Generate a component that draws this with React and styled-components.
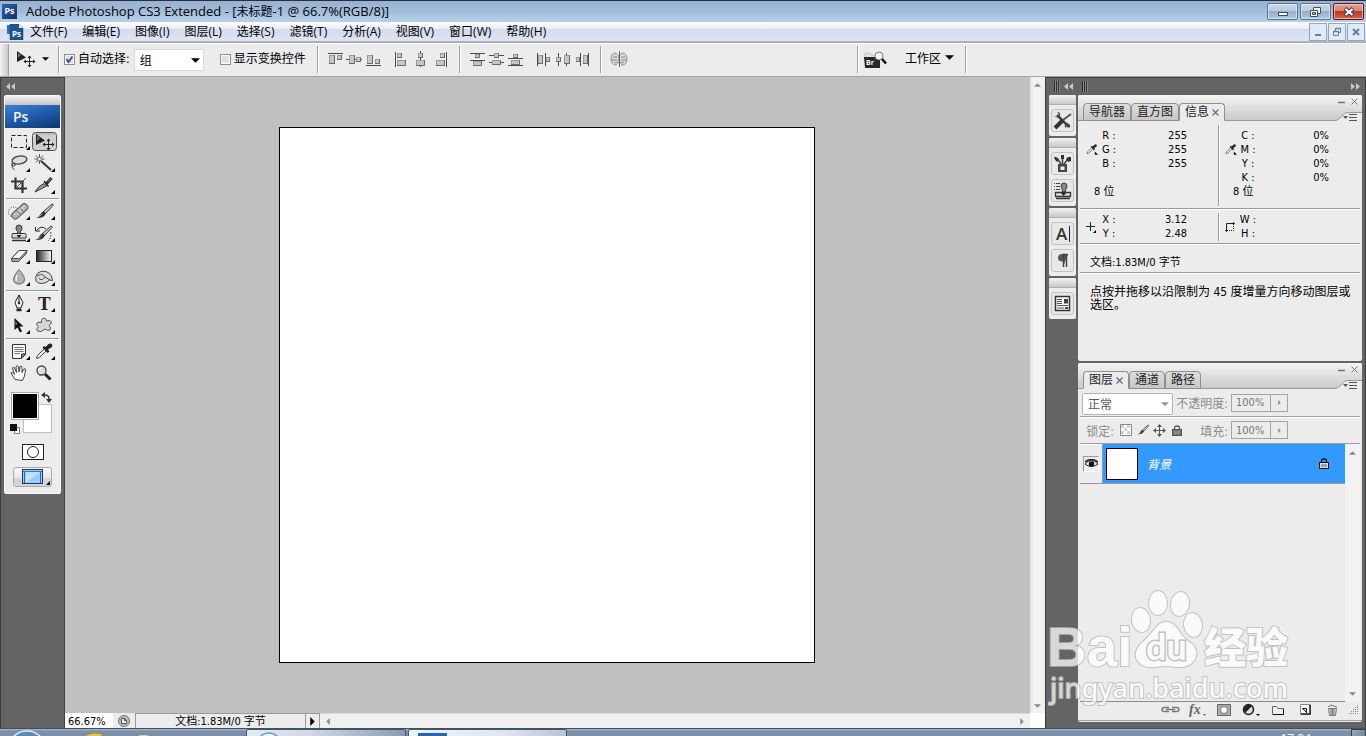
import React from "react";
import styled, { createGlobalStyle, css } from "styled-components";

const ui = `"DejaVu Sans Condensed", "Noto Sans", "Noto Sans CJK SC", sans-serif`;
const shell = `"Open Sans", "Noto Sans CJK SC", sans-serif`;

const GlobalStyle = createGlobalStyle`
  *, *::before, *::after { box-sizing: border-box; }
  body { margin: 0; background: #c0c0c0; font: 12px ${ui}; color: #000; }
  button, input, select { font: inherit; color: inherit; margin: 0; padding: 0; border: 0; background: none; border-radius: 0; }
  svg { display: block; flex: none; }
  h1, p { margin: 0; font: inherit; }
`;

const Window = styled.div`
  display: flex;
  flex-direction: column;
  min-height: 100vh;
  min-width: 1100px;
  overflow: hidden;
`;

/* ---------- title bar ---------- */
const TitleBar = styled.header`
  display: flex;
  align-items: center;
  height: 22px;
  padding: 0 2px;
  border-top: 1px solid #2b3036;
  background: linear-gradient(#97b2d1, #a2bddb 50%, #b8d0ea);
  font: 13px/20px ${shell};
`;
const AppBadge = styled.span`
  width: 15px;
  height: 15px;
  margin-right: 9px;
  background: linear-gradient(135deg, #2f62b0, #0e2f6c);
  color: #fff;
  font: bold 9px/14px ${shell};
  text-align: center;
`;
const Title = styled.h1`
  flex: 1;
  white-space: nowrap;
`;
const FileName = styled.span`
  font-size: 12px;
`;
const CaptionButtons = styled.div`
  display: flex;
  gap: 2px;
`;
const CaptionButton = styled.button`
  display: grid;
  place-items: center;
  width: 31px;
  height: 17px;
  border: 1px solid ${(p) => (p.$close ? "#5a1420" : "#5d7187")};
  border-radius: 2px;
  box-shadow: inset 0 0 0 1px rgba(255, 255, 255, 0.5);
  background: ${(p) =>
    p.$close
      ? "linear-gradient(#e3a094, #d98172 48%, #bd3a22 50%, #d0664e)"
      : "linear-gradient(#c5d8ec, #b6cbe2 48%, #94aecb 50%, #b0c9e4)"};
`;

/* ---------- menu bar ---------- */
const MenuBar = styled.nav`
  display: flex;
  align-items: center;
  gap: 1px;
  height: 20px;
  padding: 0 1px 0 7px;
  background: linear-gradient(#ffffff, #e9edf7 35%, #d5dbee 38%, #dfe4f5);
  border-bottom: 1px solid #b2b7ca;
  font: 12px/18px ${shell};
`;
const DocIcon = styled.svg`
  margin-right: -2px;
`;
const MenuItem = styled.button`
  height: 19px;
  padding: 0 7px;
  white-space: nowrap;
`;
const MdiButtons = styled.div`
  display: flex;
  gap: 1px;
  margin-left: auto;
`;
const MdiButton = styled.button`
  display: grid;
  place-items: center;
  width: 18px;
  height: 18px;
  border: 1px solid #93a6ba;
  background: #dfebf8;
`;

/* ---------- options bar ---------- */
const OptionsBar = styled.div`
  display: flex;
  align-items: center;
  height: 35px;
  background: #ececec;
  border-top: 1px solid #a9a9a9;
  border-bottom: 1px solid #a6a6a6;
  box-shadow: inset 0 1px #fff;
`;
const Grip = styled.span`
  align-self: stretch;
  width: 9px;
  margin-top: 1px;
  border-right: 1px solid #a0a0a0;
  background: linear-gradient(90deg, #f4f4f4, #c9c9c9);
`;
const ToolPreset = styled.button`
  display: flex;
  align-items: center;
  gap: 6px;
  width: 49px;
  height: 30px;
  padding: 0 0 2px 7px;
`;
const Rule = styled.span`
  width: 2px;
  height: 27px;
  border-left: 1px solid #a0a0a0;
  background: #fff;
`;
const Check = styled.label`
  display: flex;
  align-items: center;
  gap: 3px;
  height: 26px;
  margin-left: ${(p) => p.$gap}px;
  padding-bottom: 4px;
  white-space: nowrap;
`;
const CheckBox = styled.input`
  appearance: none;
  width: 11px;
  height: 11px;
  margin-top: 4px;
  border: 1px solid #8b8f94;
  box-shadow: inset 0 0 0 1px #fff;
  background: #dfe1e4;
`;
const TickHolder = styled.span`
  display: grid;
  & > * { grid-area: 1 / 1; }
  & > svg { margin-top: 4px; pointer-events: none; }
`;
const SelectFrame = styled.span`
  display: grid;
  width: ${(p) => p.$w}px;
  height: 22px;
  margin: ${(p) => p.$top || 0}px 0 0 ${(p) => p.$gap || 0}px;
  border: 1px solid ${(p) => (p.$dim ? "#b4b4b4" : "#d5dae2")};
  border-radius: ${(p) => (p.$dim ? 2 : 0)}px;
  background: #fff;
  color: ${(p) => (p.$dim ? "#5a5a5a" : "#000")};
  & > * { grid-area: 1 / 1; }
  & > svg { justify-self: end; align-self: center; margin: 2px 3px 0 0; pointer-events: none; }
`;
const Select = styled.select`
  appearance: none;
  width: 100%;
  padding: 2px 16px 0 5px;
  font-size: 12px;
  outline: 0;
`;
const IconRow = styled.div`
  display: flex;
  gap: 1px;
  margin: 0 ${(p) => p.$mr}px 0 ${(p) => p.$ml}px;
`;
const IconButton = styled.button`
  display: grid;
  place-items: center;
  width: 18px;
  height: 20px;
  margin-bottom: 2px;
`;
const WorkspaceTools = styled.div`
  display: flex;
  align-items: center;
  min-width: 509px;
  margin-left: auto;
`;
const BridgeButton = styled.button`
  margin-left: 5px;
`;
const WorkspaceButton = styled.button`
  display: flex;
  align-items: center;
  gap: 4px;
  margin: 0 11px 0 18px;
  padding-bottom: 4px;
`;

/* ---------- main area ---------- */
const Workspace = styled.div`
  display: flex;
  flex: 1;
  min-height: 0;
`;
const LeftDock = styled.aside`
  flex: none;
  width: 65px;
  padding: 0 3px;
  border: 1px solid #3f3f3f;
  border-bottom: 0;
  background: #646464;
`;
const DockHeader = styled.div`
  display: flex;
  align-items: center;
  height: 17px;
  padding: 0 2px;
`;
const Palette = styled.div`
  width: 57px;
  border: 1px solid #f8f8f8;
  border-radius: 2px;
  background: #ececec;
  padding-bottom: 6px;
`;
const PaletteCap = styled.div`
  height: 9px;
  background: linear-gradient(#f2f2f2, #c4c4c4);
`;
const PsBanner = styled.div`
  height: 23px;
  padding-left: 8px;
  background: linear-gradient(165deg, #3a80d8, #2059ab 50%, #0c3572);
  color: #f2f8ff;
  font: 600 14px/23px ${shell};
`;
const ToolGrid = styled.div`
  display: grid;
  grid-template-columns: 25px 25px;
  margin: ${(p) => (p.$first ? 3 : 1)}px 0 1px 2px;
`;
const ToolButton = styled.button`
  width: 25px;
  height: 22px;
`;
const ToolRule = styled.hr`
  height: 2px;
  margin: 0 1px;
  border: 0;
  border-top: 1px solid #9a9a9a;
  background: #fff;
`;
const Swatches = styled.div`
  display: grid;
  grid-template: 2px 12px 16px 14px / 12px 17px 13px;
  margin: 5px 0 0 6px;
`;
const Foreground = styled.button`
  z-index: 1;
  grid-area: 2 / 1 / span 2 / span 2;
  width: 28px;
  border: 1px solid #a8a8a8;
  box-shadow: inset 0 0 0 1px #fff;
  background: #000;
`;
const Background = styled.button`
  grid-area: 3 / 2 / span 2 / span 2;
  width: 29px;
  height: 29px;
  border: 1px solid #c0c0c0;
  background: #fff;
`;
const SwapButton = styled.button`
  grid-area: 1 / 3 / span 2;
`;
const ResetButton = styled.button`
  grid-area: 4 / 1;
  align-self: end;
  margin-left: -1px;
`;
const MaskButton = styled.button`
  display: grid;
  place-items: center;
  width: 22px;
  height: 16px;
  margin: 10px auto 0;
  border: 1px solid #222;
  background: #fff;
`;
const ScreenButton = styled.button`
  display: grid;
  place-items: center;
  width: 39px;
  height: 20px;
  margin: 7px auto 0;
  border: 1px solid #aaa;
  border-radius: 3px;
  background: linear-gradient(#f8f8f8, #e6e6e6 55%, #d4d4d4 60%);
`;

const DocumentArea = styled.main`
  display: grid;
  flex: 1;
  min-width: 0;
  grid-template: 1fr 15px / 1fr 15px;
`;
const Pasteboard = styled.div`
  display: grid;
  place-items: center;
  padding-right: 1px;
  background: #c0c0c0;
`;
const Page = styled.div`
  width: 536px;
  aspect-ratio: 1;
  border: 1px solid #000;
  background: #fff;
`;
const VerticalBar = styled.div`
  display: flex;
  flex-direction: column;
  justify-content: space-between;
  align-items: center;
  padding: 6px 0 5px;
  background: linear-gradient(90deg, #e4e4e4, #f4f4f4 30%, #f0f0f0);
`;
const StatusBar = styled.footer`
  display: flex;
  align-items: stretch;
  height: 15px;
  background: #ececec;
  font-size: 11px;
  line-height: 15px;
`;
const ZoomInput = styled.input`
  width: 48px;
  padding: 1px 0 0 3px;
  background: #fff;
`;
const StatusIcon = styled.button`
  display: grid;
  place-items: center;
  width: 22px;
`;
const DocSize = styled.span`
  width: 171px;
  border: 1px solid #9a9a9a;
  border-width: 1px 1px 0;
  text-align: center;
`;
const StatusArrow = styled.button`
  display: grid;
  place-items: center;
  width: 14px;
  border: 1px solid #9a9a9a;
  border-width: 1px 1px 0 0;
`;
const HorizontalBar = styled.div`
  display: flex;
  flex: 1;
  align-items: center;
  justify-content: space-between;
  padding: 0 6px;
  border-top: 1px solid #ddd;
  background: #f0f0f0;
`;
const Corner = styled.div`
  background: #fff;
`;

/* ---------- right dock ---------- */
const RightDock = styled.aside`
  flex: none;
  width: 321px;
  padding: 0 3px 6px;
  border: 1px solid #3a3a3a;
  border-bottom: 0;
  background: #646464;
  display: flex;
  flex-direction: column;
`;
const DockTitle = styled.div`
  display: flex;
  align-items: center;
  gap: 4px;
  height: 17px;
  padding: 0 1px 0 5px;
  & > :last-child { margin-left: auto; }
`;
const DockBody = styled.div`
  display: flex;
  flex: 1;
  gap: 2px;
`;
const IconDock = styled.div`
  display: flex;
  flex-direction: column;
  gap: 2px;
  width: 27px;
`;
const IconGroup = styled.div`
  display: flex;
  flex-direction: column;
  align-items: center;
  gap: 4px;
  padding-bottom: 4px;
  border-radius: 2px;
  background: #ececec;
`;
const IconCap = styled.div`
  align-self: stretch;
  height: 10px;
  border-radius: 2px 2px 0 0;
  border-bottom: 1px solid #b0b0b0;
  background: linear-gradient(#f2f2f2, #c8c8c8);
`;
const DockButton = styled.button`
  display: grid;
  place-items: center;
  width: 23px;
  height: 23px;
  border: 1px solid #c2c2c2;
  border-radius: 3px;
  background: #e8e8e8;
  & > svg { overflow: visible; }
`;
const Panels = styled.div`
  display: flex;
  flex: 1;
  flex-direction: column;
  gap: 2px;
  min-width: 0;
`;
const Panel = styled.section`
  display: flex;
  flex-direction: column;
  flex: ${(p) => (p.$grow ? 1 : "none")};
  min-height: 266px;
  border-radius: 2px;
  background: #ececec;
`;
const TabStrip = styled.div`
  display: flex;
  align-items: flex-end;
  height: 26px;
  padding-left: 5px;
  border-radius: 2px 2px 0 0;
  background: linear-gradient(#f4f4f4, #c9c9c9);
  box-shadow: inset 0 -1px #9a9a9a;
`;
const Tab = styled.button`
  display: flex;
  align-items: center;
  gap: 3px;
  height: 18px;
  padding: 0 5px;
  border: 1px solid #8f8f8f;
  border-radius: 4px 4px 0 0;
  background: linear-gradient(#dedede, #c6c6c6);
  color: #222;
  font-size: 12px;
  line-height: 16px;
  white-space: nowrap;
  ${(p) =>
    p.$active &&
    css`
      background: #ececec;
      border-bottom-color: #ececec;
    `}
`;
const PanelControls = styled.div`
  display: flex;
  flex-direction: column;
  align-items: flex-end;
  margin-left: auto;
`;
const InfoTable = styled.table`
  border-collapse: collapse;
  flex: 1;
  font-size: 11px;
  line-height: 14px;
  & th { width: 22px; padding: 0; font-weight: normal; text-align: center; }
  & td { padding: 0; text-align: right; }
`;
const InfoRow = styled.div`
  display: grid;
  grid-template-columns: 138px 1fr;
  margin: 0 2px;
  padding: 4px 0 2px;
  border-bottom: 1px solid #9a9a9a;
  box-shadow: 0 1px #fff;
  font-size: 11px;
  line-height: 14px;
`;
const InfoCell = styled.div`
  display: flex;
  flex-direction: column;
  padding: ${(p) => p.$top}px 31px 0 6px;
  & + & { border-left: 1px solid #9a9a9a; box-shadow: inset 1px 0 #fff; }
`;
const Reading = styled.div`
  display: flex;
  align-items: ${(p) => (p.$top ? "flex-start" : "center")};
  & > svg { margin-top: ${(p) => p.$top || 0}px; }
`;
const BitDepth = styled.p`
  margin: auto 0 7px 8px;
`;
const DocLine = styled.p`
  margin: 0 2px;
  padding: 11px 10px 1px;
  border-bottom: 1px solid #9a9a9a;
  box-shadow: 0 1px #fff;
  font-size: 11px;
  line-height: 16px;
`;
const Hint = styled.p`
  padding: 13px 8px 0 12px;
  font-size: 12px;
  line-height: 13px;
`;
const LayerRow = styled.div`
  display: flex;
  align-items: center;
  height: 27px;
  margin: 0 2px;
  padding: 0 2px;
  border-bottom: 1px solid #a0a0a0;
  box-shadow: 0 1px #fff;
  color: #8c8c8c;
  white-space: nowrap;
  ${TabStrip} + & { height: 28px; }
`;
const FieldLabel = styled.label`
  width: ${(p) => p.$w}px;
  padding-right: 3px;
  text-align: right;
`;
const Stepper = styled.span`
  display: flex;
  width: 57px;
  height: 18px;
  border: 1px solid #a4a4a4;
`;
const StepInput = styled.input`
  width: 39px;
  padding-left: 4px;
  color: #777;
  font-size: 11px;
  border-right: 1px solid #a4a4a4;
`;
const StepButton = styled.button`
  display: grid;
  place-items: center;
  flex: 1;
`;
const LockButton = styled.button`
  display: grid;
  place-items: center;
  width: 17px;
  height: 18px;
`;
const LayerBody = styled.div`
  display: flex;
  flex: 1;
  margin: 0 2px;
`;
const LayerList = styled.ul`
  flex: 1;
  margin: 0;
  padding: 0;
  list-style: none;
  border-bottom: 1px solid #8a8a8a;
`;
const Layer = styled.li`
  display: flex;
  height: 40px;
  border-bottom: 1px solid #9a9a9a;
`;
const EyeCell = styled.button`
  display: grid;
  place-items: center;
  width: 23px;
  border-right: 1px solid #9a9a9a;
`;
const EyeBox = styled.span`
  display: grid;
  place-items: center;
  width: 16px;
  height: 16px;
  border: 1px solid #999;
  border-right-color: #fff;
  border-bottom-color: #fff;
`;
const LayerName = styled.div`
  display: flex;
  flex: 1;
  align-items: center;
  gap: 9px;
  padding: 0 16px 0 3px;
  background: #3399ff;
  color: #fff;
  font-style: italic;
  & > :last-child { margin-left: auto; }
`;
const Thumb = styled.span`
  width: 32px;
  height: 32px;
  border: 1px solid #000;
  background: #fff;
`;
const LayerScroll = styled.div`
  display: flex;
  flex-direction: column;
  justify-content: space-between;
  align-items: center;
  width: 15px;
  padding: 7px 0 6px;
  background: #f2f2f2;
`;
const LayerFooter = styled.footer`
  display: flex;
  align-items: center;
  justify-content: flex-end;
  gap: 7px;
  height: 19px;
  margin-bottom: 1px;
  padding: 0 3px 3px 0;
  border-bottom: 1px solid #a0a0a0;
`;
const FootButton = styled.button`
  display: grid;
  place-items: center;
  width: 20px;
  height: 16px;
`;

/* ---------- taskbar ---------- */
const Taskbar = styled.footer`
  display: flex;
  height: 8px;
  overflow: hidden;
  border-top: 1px solid #3d5064;
  background: linear-gradient(#a8bdd2, #7e91aa 2px, #7b8ea8);
`;
const TaskButton = styled.button`
  display: flex;
  height: 30px;
  width: ${(p) => p.$w}px;
  margin-right: 2px;
  padding-left: 8px;
  border: 1px solid #46566a;
  border-radius: 2px;
  background: linear-gradient(90deg, #e6ebf2, #d0d8e3 40%, #8c9bb0);
  ${(p) => p.$active && css`background: linear-gradient(90deg, #f0f3f8, #dfe6ef 60%, #b8c4d4);`}
`;
const Clock = styled.time`
  margin: 2px 40px 0 auto;
  color: #fff;
  font: 12px/16px ${shell};
`;
const ShowDesktop = styled.button`
  width: 15px;
  height: 30px;
  border: 1px solid #35414e;
  background: linear-gradient(135deg, #9aaabb, #4b5a6b);
`;

const Watermark = styled.div`
  position: absolute;
  right: 68px;
  bottom: 28px;
  pointer-events: none;
`;
const Mark = styled.g`
  fill: #fff;
  stroke: #b4b4b4;
  stroke-width: 2px;
  paint-order: stroke;
  opacity: 0.75;
`;

/* ---------- drawings ---------- */
const Down = ({ w = 9, c = "#000" }) => (
  <svg width={w} height={(w + 1) / 2} viewBox="0 0 10 5"><path d="M0 0H10L5 5Z" fill={c} /></svg>
);
const Up = () => <svg width="7" height="4" viewBox="0 0 8 4"><path d="M0 4H8L4 0Z" fill="#8a8a8a" /></svg>;
const Side = ({ flip, c = "#8a8a8a", w = 4, h = 7 }) => (
  <svg width={w} height={h} viewBox="0 0 4 8"><path d={flip ? "M4 0V8L0 4Z" : "M0 0V8L4 4Z"} fill={c} /></svg>
);
const Chevrons = ({ right }) => (
  <svg width="10" height="7" viewBox="0 0 10 7" fill="#c8c8c8">
    <path d={right ? "M0 0L4 3.500L0 7ZM5 0L9 3.500L5 7Z" : "M4 0V7L0 3.500ZM9 0V7L5 3.500Z"} />
  </svg>
);
const Ridges = () => (
  <svg width="6" height="11" viewBox="0 0 6 11"><path d="M.5 0V11M2.500 0V11M4.500 0V11" stroke="#2e2e2e" /><path d="M1.500 0V11M3.500 0V11M5.500 0V11" stroke="#8a8a8a" /></svg>
);
const Cross = ({ s = 7 }) => (
  <svg width={s} height={s} viewBox="0 0 7 7"><path d="M.5.5L6.500 6.500M6.500.5L.5 6.500" stroke="#666" strokeWidth="1.100" /></svg>
);
const Move = () => (
  <>
    <path d="M4 3V14L13 9.500Z" fill="#222" /><path d="M5 5V10L8 7Z" fill="#777" />
    <path d="M16.500 8.500V18.500M11.500 13.500H21.500" stroke="#222" />
    <path d="M16.500 7.500l2 2.500h-4zM16.500 19.500l2-2.500h-4zM10.500 13.500l2.500-2v4zM22.500 13.500l-2.500-2v4z" fill="#222" />
  </>
);
const Pipette = () => (
  <>
    <path d="M4.500 17.500L5.500 14.500L13 7L15 9L7.500 16.500Z" fill="#eee" stroke="#444" />
    <path d="M10.500 6.500L12 5L13.500 6L16 3.500Q18.500 1.500 20 3.500Q21 5.500 18.500 7L16 8.500L17.500 10.500L15.500 12Z" fill="#222" />
  </>
);
const BrushArt = () => (
  <>
    <path d="M11 11L20 3Q21.500 3 21 4.500L13.500 12.500Z" fill="#ccc" stroke="#333" />
    <path d="M11.500 10.500Q14.500 11.500 13.500 13.500Q11 17.500 4 17Q7.500 16 8.500 13Q9.500 10.500 11.500 10.500Z" fill="#333" />
    <path d="M10 12.500L7.500 15.500" stroke="#aaa" />
  </>
);

const tools = {
  marquee: <path d="M4.500 4.500H19.500V16.500H4.500Z" fill="none" stroke="#222" strokeDasharray="4 2" />,
  move: (
    <><rect x=".5" y="1.500" width="24" height="18" rx="3" fill="#cfcfcf" stroke="#555" /><path d="M2 3.500Q2 3 3 3H22" fill="none" stroke="#aaa" /><Move /></>
  ),
  lasso: (
    <><ellipse cx="12.500" cy="7" rx="7.500" ry="4" fill="#ddd" stroke="#444" strokeWidth="1.300" transform="rotate(-10 12.500 7)" />
      <path d="M5.500 9.500Q3.500 12 6 13Q9 13.500 8 11Q6 9.500 5 12Q4.500 15 7.500 17" fill="none" stroke="#444" /></>
  ),
  wand: (
    <><path d="M9 8L19 17" stroke="#333" strokeWidth="2" /><path d="M7.500 1V11M2.500 6H12.500M4 2.500L11 9.500M11 2.500L4 9.500" stroke="#555" /><circle cx="7.500" cy="6" r="1.800" fill="#fff" stroke="#444" strokeWidth=".6" /></>
  ),
  crop: (
    <><path d="M8.500 2.500V13.500H20M4 6.500H15.500V18" fill="none" stroke="#333" strokeWidth="2.200" /><path d="M9.500 12.500L19 3" stroke="#444" /></>
  ),
  slice: (
    <><path d="M3 17Q6 11 12 8.500L14.500 11Q9 14 3 17Z" fill="#999" stroke="#333" /><path d="M12 6L16.500 11.500" stroke="#222" strokeWidth="1.500" /><path d="M14.500 8.500L19.500 3" stroke="#222" strokeWidth="3" /><path d="M15.500 7L19 3.500" stroke="#aaa" /></>
  ),
  heal: (
    <><circle cx="6.500" cy="11" r="5" fill="none" stroke="#333" strokeDasharray="1 1.500" />
      <rect x="3" y="7" width="19" height="7" rx="3.500" fill="#b4b4b4" stroke="#555" transform="rotate(-42 12.500 10)" />
      <path d="M9 9L14 14M12 6L16.500 11" stroke="#777" /><path d="M8 13h.1M10.500 13h.1M12 10h1M15 7h1M17 5h.1M13 8h.1" stroke="#fff" strokeWidth="1.200" strokeLinecap="round" /></>
  ),
  brush: <BrushArt />,
  stamp: (
    <><path d="M9 5Q9 2 12 2Q15 2 15 5Q15 7 13.500 8.500V11H10.500V8.500Q9 7 9 5Z" fill="#888" stroke="#333" /><path d="M5 11.500Q5 10.500 6 10.500H18Q19 10.500 19 11.500V15H5Z" fill="#ddd" stroke="#333" /><path d="M5 17.500H19" stroke="#333" strokeWidth="1.500" /><path d="M9.500 12H14.500L12 15Z" fill="#222" /></>
  ),
  history: (
    <><g transform="translate(-1 0)"><BrushArt /></g><path d="M5 7Q9 2 14 6M3.500 4V8H8" fill="none" stroke="#222" /><path d="M18.500 9Q20 14 16 18" fill="none" stroke="#222" strokeDasharray="1.500 1.500" /></>
  ),
  eraser: (
    <><path d="M4.500 13.500L12 5.500H20L19 9L11.500 16.500H5Z" fill="#aaa" stroke="#444" /><path d="M4.500 13.500L12 5.500H20L12.500 13.500Z" fill="#f6f6f6" stroke="#444" /></>
  ),
  gradient: (
    <><defs><linearGradient id="ramp"><stop stopColor="#222" /><stop offset="1" stopColor="#fff" /></linearGradient></defs><rect x="4.500" y="5.500" width="15" height="11" fill="url(#ramp)" stroke="#222" /></>
  ),
  blur: <><path d="M12 2.500Q17.500 9 17.500 12.500Q17 17 12 17Q7 17 6.500 12.500Q6.500 9 12 2.500Z" fill="#b4b4b4" stroke="#666" /><path d="M10 8Q8.500 11 9.500 14" stroke="#f0f0f0" strokeWidth="1.500" fill="none" /></>,
  sponge: (
    <><path d="M4 14Q2.500 9 6 6Q11 2.500 17 6Q20 8 20.500 13.500L17.500 13Q15 16.500 9 16.500Q5 16 4 14Z" fill="#ddd" stroke="#444" /><path d="M5 9Q9 6 12 8.500Q14 11 10.500 12.500Q7 13 7 11M13 10L18 13" fill="none" stroke="#555" /></>
  ),
  pen: (
    <><path d="M12 2L8 9.500L10 15H14L16 9.500Z" fill="#eee" stroke="#222" /><path d="M12 2V9" stroke="#222" /><circle cx="12" cy="10" r="1.200" fill="#222" /><path d="M9.500 17H14.500" stroke="#222" strokeWidth="2.500" /></>
  ),
  path: <><path d="M7.500 3V15L10.500 12.500L13 17.500L15 16.500L12.500 11.500H16.500Z" fill="#111" /><path d="M8.500 6V10L10.500 9Z" fill="#888" /></>,
  shape: <path d="M10.500 3.500Q14 2 14.500 6Q19 4.500 19.500 7Q19.500 9 17 10.500Q20 13.500 18 15Q15.500 16 13 14Q9.500 18 5.500 16Q3.500 13.500 6.500 11.500Q3.500 10 5 8Q7 6.500 9.500 7.500Q9 5 10.500 3.500Z" fill="#d6d6d6" stroke="#555" />,
  notes: <><path d="M5.500 3.500H18.500V13L14.500 17.500H5.500Z" fill="#f4f4f4" stroke="#333" /><path d="M18.500 13H14.500V17.500Z" fill="#888" stroke="#333" /><path d="M7.500 6.500H16.500M7.500 8.500H16.500M7.500 10.500H16.500M7.500 12.500H13" stroke="#777" /></>,
  pipette: <Pipette />,
  hand: <path d="M8 16.500L4 10Q4.500 8.500 6 10L7.500 11.500L5.500 5Q6.500 3 7.500 5L9.500 9.500L9 3.500Q10.500 2 11.500 3.500L12 9L13 3.500Q14.500 2.500 15 4L15 9.500L17 6Q18.500 5 18.500 7L17.500 13L15.500 17.500Z" fill="#f8f8f8" stroke="#444" />,
  zoom: <><path d="M13 11L18.500 16.500" stroke="#222" strokeWidth="3" /><circle cx="9.500" cy="7.500" r="4.500" fill="#ddd" stroke="#444" strokeWidth="1.300" /><path d="M7 7Q7.500 5 9.500 5" fill="none" stroke="#fff" strokeWidth="1.500" /></>,
};

const TypeGlyph = styled.text`
  font: bold 19px "Liberation Serif", serif;
  fill: #222;
`;
function Tool({ name, label, flyout = true }) {
  return (
    <ToolButton aria-label={label}>
      <svg width="25" height="22" viewBox="0 0 25 22">
        {name === "type" ? <TypeGlyph x="6" y="17">T</TypeGlyph> : tools[name]}
        {flyout && <path d="M23 15V19H19Z" fill="#000" />}
      </svg>
    </ToolButton>
  );
}
function Tools({ items, first }) {
  return <ToolGrid $first={first}>{items.map((t) => <Tool key={t[0]} name={t[0]} label={t[1]} flyout={t[2] !== 0} />)}</ToolGrid>;
}

const alignArt = {
  top: { l: "M1 3.500H16", b: [[2, 5, 6, 9], [10, 5, 5, 5]] },
  middle: { l: "M0 9.500H16", b: [[3, 5, 6, 9], [10, 7, 5, 5]] },
  bottom: { l: "M1 15.500H16", b: [[2, 5, 6, 9], [10, 9, 5, 5]] },
  left: { l: "M2.500 2V17", b: [[4, 3, 5, 5], [4, 10, 9, 6]] },
  center: { l: "M8.500 1V17", b: [[6, 3, 5, 5], [4, 10, 9, 6]] },
  right: { l: "M15.500 2V17", b: [[9, 3, 5, 5], [5, 10, 9, 6]] },
  dTop: { l: "M1 3.500H16M1 10.500H16", b: [[6, 4, 5, 4], [4, 11, 9, 5]] },
  dMiddle: { l: "M1 5.500H16M1 12.500H16", b: [[6, 3, 5, 5], [4, 10, 9, 5]] },
  dBottom: { l: "M1 8.500H16M1 15.500H16", b: [[6, 4, 5, 4], [4, 10, 9, 5]] },
  dLeft: { l: "M2.500 3V16M10.500 3V16", b: [[3, 5, 5, 9], [11, 7, 4, 5]] },
  dCenter: { l: "M4.500 3V16M12.500 3V16", b: [[2, 7, 5, 5], [10, 5, 6, 9]] },
  dRight: { l: "M7.500 3V16M15.500 3V16", b: [[3, 7, 4, 5], [10, 5, 5, 9]] },
};
function Align({ names }) {
  return names.map((n) => (
    <IconButton key={n} aria-label={n}>
      <svg width="18" height="18" viewBox="0 0 18 18">
        <path d={alignArt[n].l} stroke="#4c4c4c" />
        {alignArt[n].b.map((b, i) => (
          <React.Fragment key={i}>
            <rect x={b[0] + 0.5} y={b[1] + 0.5} width={b[2] - 1} height={b[3] - 1} fill="#c6c6c6" stroke="#9a9a9a" />
            <path d={`M${b[0] + b[2] - 0.5} ${b[1]}V${b[1] + b[3] - 0.5}H${b[0]}`} fill="none" stroke="#6a6a6a" />
          </React.Fragment>
        ))}
      </svg>
    </IconButton>
  ));
}

const MiniPipette = () => <svg width="12" height="12" viewBox="3 1 19 18"><Pipette /><path d="M17 14v5h5z" /></svg>;
const LockArt = ({ light, c = "#333" }) => (
  <svg width="10" height="11" viewBox="0 0 10 11"><path d="M2.500 5V3Q2.500 1 5 1Q7.500 1 7.500 3V5" fill="none" stroke={c} strokeWidth="1.300" /><rect x=".5" y="4.500" width="9" height="6" fill={light ? "#ddd" : "#777"} stroke={c} /><path d="M3 6V9M5 6V9M7 6V9" stroke={light ? "#666" : "#999"} /></svg>
);

function StripControls() {
  return (
    <PanelControls>
      <svg width="26" height="26" viewBox="0 0 26 26">
        <path d="M0 25.500Q3 25 6 21L9 18.500Q10 17.500 13 17.500H26V26H0Z" fill="#ececec" />
        <path d="M0 25.500Q2 25 5 22L8 19Q9.500 17.500 12 17.500H26" fill="none" stroke="#9a9a9a" />
        <path d="M2 7.500H9" stroke="#777" strokeWidth="1.500" />
        <path d="M15.500 3.500L21.500 9.500M21.500 3.500L15.500 9.500" stroke="#777" />
        <path d="M7 21H12L9.500 24Z" fill="#555" /><path d="M13 19.500H21M13 22.500H21M13 25.500H21" stroke="#555" />
      </svg>
    </PanelControls>
  );
}

function Readings({ rows, icon, top, caption }) {
  return (
    <Reading $top={top}>
      {icon}
      <InfoTable aria-label={caption}>
        <tbody>
          {rows.map(([k, v]) => <tr key={k}><th scope="row">{k} :</th><td>{v}</td></tr>)}
        </tbody>
      </InfoTable>
    </Reading>
  );
}

const menus = ["文件(F)", "编辑(E)", "图像(I)", "图层(L)", "选择(S)", "滤镜(T)", "分析(A)", "视图(V)", "窗口(W)", "帮助(H)"];

export default function App() {
  return (
    <>
      <GlobalStyle />
      <Window>
        <TitleBar>
          <AppBadge>Ps</AppBadge>
          <Title>Adobe Photoshop CS3 Extended - [<FileName>未标题</FileName>-1 @ 66.7%(RGB/8)]</Title>
          <CaptionButtons>
            <CaptionButton aria-label="最小化"><svg width="12" height="10"><rect x="1.500" y="5.500" width="9" height="3" fill="#fff" stroke="#43506a" /></svg></CaptionButton>
            <CaptionButton aria-label="还原"><svg width="13" height="12"><path d="M4.500 1.500H11.500V7.500H4.500Z" fill="#fff" stroke="#43506a" /><path d="M1.500 4.500H8.500V10.500H1.500Z" fill="#fff" stroke="#43506a" /><path d="M3.500 6.500H6.500V8.500H3.500Z" fill="#8ba4c0" stroke="#43506a" /></svg></CaptionButton>
            <CaptionButton $close aria-label="关闭"><svg width="12" height="10"><path d="M2 1.500L10 8.500M10 1.500L2 8.500" stroke="#43374a" strokeWidth="4" /><path d="M2.500 2L9.500 8M9.500 2L2.500 8" stroke="#fff" strokeWidth="2.200" /></svg></CaptionButton>
          </CaptionButtons>
        </TitleBar>

        <MenuBar>
          <DocIcon width="17" height="16" viewBox="0 0 17 16">
            <path d="M0 1H12V10H0Z" fill="#2b72b8" /><path d="M3 0H12L16 4V16H3Z" fill="#1d5598" stroke="#12417a" strokeWidth=".5" /><path d="M12 0V4H16Z" fill="#fff" />
            <text x="5" y="13" fontSize="8" fontWeight="bold" fill="#fff" fontFamily="Open Sans">Ps</text>
          </DocIcon>
          {menus.map((m) => <MenuItem key={m}>{m}</MenuItem>)}
          <MdiButtons>
            <MdiButton aria-label="最小化文档"><svg width="10" height="10"><path d="M2 8H8" stroke="#6c7f96" strokeWidth="2" /></svg></MdiButton>
            <MdiButton aria-label="还原文档"><svg width="10" height="10"><path d="M3.500 4V1.500H8.500V5.500H6.500M1.500 4.500H6.500V8.500H1.500Z" fill="none" stroke="#6c7f96" /><path d="M3 1.500H9M1 4.500H7" stroke="#6c7f96" strokeWidth="1.500" /></svg></MdiButton>
            <MdiButton aria-label="关闭文档"><svg width="10" height="10"><path d="M2 2L8 8M8 2L2 8" stroke="#6c7f96" strokeWidth="2" /></svg></MdiButton>
          </MdiButtons>
        </MenuBar>

        <OptionsBar>
          <Grip />
          <ToolPreset aria-label="移动工具"><svg width="20" height="18" viewBox="3 2 20 18"><Move /></svg><Down w={7} /></ToolPreset>
          <Rule />
          <Check $gap={4}>
            <TickHolder><CheckBox type="checkbox" defaultChecked /><svg width="11" height="11"><path d="M2.500 5L4.500 8L8.500 2.500" fill="none" stroke="#3c5796" strokeWidth="2" /></svg></TickHolder>
            自动选择:
          </Check>
          <SelectFrame $w={70} $gap={4}><Select aria-label="自动选择对象" defaultValue="组"><option>组</option><option>图层</option></Select><Down /></SelectFrame>
          <Check $gap={16}><CheckBox type="checkbox" />显示变换控件</Check>
          <IconRow $ml={11} $mr={0}><Rule /></IconRow>
          <IconRow $ml={8} $mr={10}><Align names={["top", "middle", "bottom"]} /></IconRow>
          <IconRow $ml={0} $mr={10}><Align names={["left", "center", "right"]} /></IconRow>
          <Rule />
          <IconRow $ml={8} $mr={10}><Align names={["dTop", "dMiddle", "dBottom"]} /></IconRow>
          <IconRow $ml={0} $mr={9}><Align names={["dLeft", "dCenter", "dRight"]} /></IconRow>
          <Rule />
          <IconRow $ml={8} $mr={0}>
            <IconButton aria-label="自动对齐图层"><svg width="18" height="18" viewBox="0 0 18 18"><ellipse cx="5" cy="9" rx="4" ry="6" fill="#d8d8d8" stroke="#909090" /><ellipse cx="13" cy="9" rx="4" ry="6" fill="#d8d8d8" stroke="#909090" /><path d="M3 7H7M2 10H7M11 7H15M11 10H16M4 12Q6 14 7 12M11 12Q12 14 14 12" fill="none" stroke="#888" /><path d="M9.500 1V17" stroke="#666" /></svg></IconButton>
          </IconRow>
          <WorkspaceTools>
            <Rule />
            <BridgeButton aria-label="转到 Bridge">
              <svg width="23" height="18" viewBox="0 0 23 18"><path d="M1 2H6L8 4H15V9H1Z" fill="#e0e0e0" stroke="#aaa" strokeWidth=".5" /><path d="M0 6H16V17H1Z" fill="#282828" /><circle cx="15" cy="5" r="4" fill="#f6f6f6" stroke="#777" /><path d="M18 8L22 12.500" stroke="#111" strokeWidth="2.500" /><text x="2" y="14" fontSize="7" fontWeight="bold" fill="#fff" fontFamily="Open Sans">Br</text></svg>
            </BridgeButton>
            <WorkspaceButton>工作区 <Down w={9} /></WorkspaceButton>
            <Rule />
          </WorkspaceTools>
        </OptionsBar>

        <Workspace>
          <LeftDock>
            <DockHeader><Chevrons /></DockHeader>
            <Palette>
              <PaletteCap />
              <PsBanner>Ps</PsBanner>
              <Tools first items={[["marquee", "矩形选框"], ["move", "移动", 0], ["lasso", "套索"], ["wand", "魔棒"], ["crop", "裁剪", 0], ["slice", "切片"]]} />
              <ToolRule />
              <Tools items={[["heal", "修复画笔"], ["brush", "画笔"], ["stamp", "仿制图章"], ["history", "历史记录画笔"], ["eraser", "橡皮擦"], ["gradient", "渐变"], ["blur", "模糊"], ["sponge", "海绵"]]} />
              <ToolRule />
              <Tools items={[["pen", "钢笔"], ["type", "文字"], ["path", "路径选择"], ["shape", "自定形状"]]} />
              <ToolRule />
              <Tools items={[["notes", "注释"], ["pipette", "吸管"], ["hand", "抓手", 0], ["zoom", "缩放", 0]]} />
              <Swatches>
                <Foreground aria-label="前景色" />
                <Background aria-label="背景色" />
                <SwapButton aria-label="切换颜色"><svg width="13" height="13"><path d="M3 4H5Q9 4 9 8V9" fill="none" stroke="#333" strokeWidth="1.500" /><path d="M1 4L5 1V7ZM9 12L6 8H12Z" fill="#333" /></svg></SwapButton>
                <ResetButton aria-label="默认颜色"><svg width="11" height="10"><path d="M4.500 3.500H9.500V9.500H4.500Z" fill="#fff" stroke="#777" /><path d="M0 0H7V7H0Z" fill="#111" /></svg></ResetButton>
              </Swatches>
              <MaskButton aria-label="快速蒙版"><svg width="14" height="14"><circle cx="7" cy="7" r="5.500" fill="#fff" stroke="#222" /></svg></MaskButton>
              <ScreenButton aria-label="屏幕模式"><svg width="37" height="18"><rect x="8.500" y="1.500" width="20" height="14" fill="#9cccfa" stroke="#14386c" /><path d="M9 3.500H28" stroke="#3178cc" /><path d="M10.500 4V15M26.500 4V15" stroke="#2d6bb8" /><path d="M12 4H26L12 15Z" fill="#c0e0ff" /><path d="M36 13V17H32Z" /></svg></ScreenButton>
            </Palette>
          </LeftDock>

          <DocumentArea>
            <Pasteboard><Page /></Pasteboard>
            <VerticalBar><Up /><Down w={7} c="#8a8a8a" /></VerticalBar>
            <StatusBar>
              <ZoomInput aria-label="缩放比例" defaultValue="66.67%" />
              <StatusIcon aria-label="版本"><svg width="12" height="12"><circle cx="6" cy="6" r="5.500" fill="#bbb" stroke="#777" /><path d="M3.500 3.500H6.500L8.500 5.500V8.500H3.500ZM6.500 3.500V5.500H8.500" fill="#eee" stroke="#555" /></svg></StatusIcon>
              <DocSize>文档:1.83M/0 字节</DocSize>
              <StatusArrow aria-label="状态选项"><Side c="#000" w={5} h={9} /></StatusArrow>
              <HorizontalBar><Side flip /><Side /></HorizontalBar>
            </StatusBar>
            <Corner />
          </DocumentArea>

          <RightDock>
            <DockTitle><Ridges /><Chevrons /><span /><Ridges /><Chevrons right /></DockTitle>
            <DockBody>
              <IconDock>
                <IconGroup>
                  <IconCap />
                  <DockButton aria-label="工具预设"><svg width="19" height="19"><path d="M4 4L16 16" stroke="#444" strokeWidth="2.500" /><path d="M1 5L4 6L6 3L4 1Q8 1 7 5Q5 8 1 5ZM14 12Q18 13 17 17L15 14L12 17Q11 13 14 12Z" fill="#444" /><path d="M2 17L10 9" stroke="#333" strokeWidth="4" /><path d="M10 9L18 3" stroke="#555" strokeWidth="2" /></svg></DockButton>
                </IconGroup>
                <IconGroup>
                  <IconCap />
                  <DockButton aria-label="画笔"><svg width="19" height="19"><path d="M5 10H14V18H5Z" fill="#444" /><path d="M7.500 12.500H11.500V16H7.500Z" fill="#eee" /><path d="M8 10L4 4M9.500 10V3M11 10L15 5" stroke="#444" strokeWidth="1.500" /><path d="M1 3Q3 2 6 6L4 8Q2 7 1 3ZM8 1H11V5H8ZM13 5L15 3H18V7L15 8Z" fill="#333" /></svg></DockButton>
                  <DockButton aria-label="仿制源"><svg width="19" height="19"><path d="M8 5Q8 2 11 2Q14 2 14 5Q14 7 12.500 9V11H9.500V9Q8 7 8 5Z" fill="#888" stroke="#444" /><path d="M2.500 11.500H17.500V15.500H2.500ZM3 17.500H17" fill="#ddd" stroke="#333" strokeWidth="1.300" /><path d="M8 12H13L10.500 15Z" fill="#222" /><path d="M1 2.500H2M3 2.500H7M1 5.500H2M3 5.500H7M1 8.500H2M3 8.500H7" stroke="#444" /></svg></DockButton>
                </IconGroup>
                <IconGroup>
                  <IconCap />
                  <DockButton aria-label="字符"><svg width="19" height="19"><text x="3" y="16" fontSize="17" fill="#333" fontFamily="Open Sans" fontWeight="600">A</text><path d="M16.500 2V18" stroke="#222" /></svg></DockButton>
                  <DockButton aria-label="段落"><svg width="19" height="19"><path d="M15 3H9Q5 3 5 7Q5 10.500 10 10.500V16" fill="#555" /><path d="M10.500 3V16M13.500 3V16M9 3.500H15" stroke="#444" strokeWidth="1.500" /></svg></DockButton>
                </IconGroup>
                <IconGroup>
                  <IconCap />
                  <DockButton aria-label="图层复合"><svg width="19" height="19"><rect x="2.500" y="2.500" width="14" height="14" fill="#fafafa" stroke="#333" strokeWidth="1.500" /><path d="M4 5.500H9M4 7.500H9M4 9.500H9M4 11.500H15M4 14H11" stroke="#555" /><path d="M11 5H15V9.500H11ZM12 13H15V15H12Z" fill="#444" /></svg></DockButton>
                </IconGroup>
              </IconDock>

              <Panels>
                <Panel>
                  <TabStrip>
                    <Tab>导航器</Tab><Tab>直方图</Tab><Tab $active>信息 <Cross /></Tab>
                    <StripControls />
                  </TabStrip>
                  <InfoRow>
                    <InfoCell $top={4}>
                      <Readings top={14} icon={<MiniPipette />} caption="RGB" rows={[["R", "255"], ["G", "255"], ["B", "255"]]} />
                      <BitDepth>8 位</BitDepth>
                    </InfoCell>
                    <InfoCell $top={4}>
                      <Readings top={14} icon={<MiniPipette />} caption="CMYK" rows={[["C", "0%"], ["M", "0%"], ["Y", "0%"], ["K", "0%"]]} />
                      <BitDepth>8 位</BitDepth>
                    </InfoCell>
                  </InfoRow>
                  <InfoRow>
                    <InfoCell $top={0}>
                      <Readings caption="坐标" icon={<svg width="12" height="12"><path d="M4.500 1V10M0 5.500H9" stroke="#222" /><path d="M10 9v3H7z" /></svg>} rows={[["X", "3.12"], ["Y", "2.48"]]} />
                    </InfoCell>
                    <InfoCell $top={0}>
                      <Readings caption="尺寸" icon={<svg width="12" height="12"><path d="M1.500 10V2.500H9" fill="none" stroke="#222" /><path d="M2 9.500H8.500V3" fill="none" stroke="#222" strokeDasharray="1 1" /><path d="M0 9H3L1.500 11ZM8 1L10 2.500L8 4Z" /></svg>} rows={[["W", ""], ["H", ""]]} />
                    </InfoCell>
                  </InfoRow>
                  <DocLine>文档:1.83M/0 字节</DocLine>
                  <Hint>点按并拖移以沿限制为 45 度增量方向移动图层或选区。</Hint>
                </Panel>

                <Panel $grow>
                  <TabStrip>
                    <Tab $active>图层 <Cross /></Tab><Tab>通道</Tab><Tab>路径</Tab>
                    <StripControls />
                  </TabStrip>
                  <LayerRow>
                    <SelectFrame $w={91} $top={2} $dim><Select aria-label="混合模式" defaultValue="正常"><option>正常</option></Select><Down w={8} c="#999" /></SelectFrame>
                    <FieldLabel $w={58} htmlFor="opacity">不透明度:</FieldLabel>
                    <Stepper><StepInput id="opacity" defaultValue="100%" /><StepButton aria-label="不透明度滑块"><Side w={3} h={5} /></StepButton></Stepper>
                  </LayerRow>
                  <LayerRow>
                    <FieldLabel $w={35} as="span">锁定:</FieldLabel>
                    <LockButton aria-label="锁定透明像素"><svg width="12" height="12"><path d="M.5.5H11.500V11.500H.5Z" fill="#fff" stroke="#888" /><path d="M1 1H4V4H7V1H10V4H7V7H10V10H7V7H4V10H1V7H4V4H1Z" fill="#d0d0d0" /></svg></LockButton>
                    <LockButton aria-label="锁定图像像素"><svg width="14" height="14" viewBox="2 1 21 19"><BrushArt /></svg></LockButton>
                    <LockButton aria-label="锁定位置"><svg width="13" height="13"><path d="M6.500 1V12M1 6.500H12" stroke="#555" /><path d="M6.500 0L9 3H4ZM6.500 13L9 10H4ZM0 6.500L3 4V9ZM13 6.500L10 4V9Z" fill="#555" /></svg></LockButton>
                    <LockButton aria-label="锁定全部"><LockArt c="#555" /></LockButton>
                    <FieldLabel $w={46} htmlFor="fill">填充:</FieldLabel>
                    <Stepper><StepInput id="fill" defaultValue="100%" /><StepButton aria-label="填充滑块"><Side w={3} h={5} /></StepButton></Stepper>
                  </LayerRow>
                  <LayerBody>
                    <LayerList>
                      <Layer>
                        <EyeCell aria-label="图层可见性"><EyeBox><svg width="13" height="10"><path d="M0 5Q6 -2 13 5Q6 10 0 5Z" fill="#fff" stroke="#222" /><circle cx="6.500" cy="5" r="2.800" fill="#111" /><path d="M0 3Q6 -2 13 3" fill="none" stroke="#222" strokeWidth="1.500" /></svg></EyeBox></EyeCell>
                        <LayerName><Thumb /><span>背景</span><LockArt light c="#111" /></LayerName>
                      </Layer>
                    </LayerList>
                    <LayerScroll><Up /><Down w={7} c="#8a8a8a" /></LayerScroll>
                  </LayerBody>
                  <LayerFooter>
                    <FootButton aria-label="链接图层"><svg width="19" height="9"><path d="M8 2.500H3.500Q1 2.500 1 4.500Q1 6.500 3.500 6.500H8M11 2.500H15.500Q18 2.500 18 4.500Q18 6.500 15.500 6.500H11M5 4.500H14" fill="none" stroke="#777" strokeWidth="1.500" /></svg></FootButton>
                    <FootButton aria-label="图层样式"><svg width="20" height="16"><text x="2" y="12" fontSize="14" fontStyle="italic" fontWeight="bold" fill="#666" fontFamily="Liberation Serif">fx</text><path d="M16 12h3l-1.500 2z" fill="#666" /></svg></FootButton>
                    <FootButton aria-label="图层蒙版"><svg width="14" height="12"><path d="M.5.5H13.500V11.500H.5Z" fill="#aaa" stroke="#666" /><circle cx="7" cy="6" r="3.500" fill="#fff" stroke="#777" /></svg></FootButton>
                    <FootButton aria-label="调整图层"><svg width="18" height="14"><circle cx="6.500" cy="6.500" r="5" fill="#ddd" stroke="#222" strokeWidth="1.500" /><path d="M3 10A5 5 0 0 1 10 3Z" fill="#222" /><path d="M14 11h4l-2 2z" /></svg></FootButton>
                    <FootButton aria-label="新建组"><svg width="12" height="10"><path d="M.5 1.500H4.500L6 3.500H11.500V9.500H.5Z" fill="#eee" stroke="#666" /><path d="M1 9.500H11.500V4" fill="none" stroke="#111" /></svg></FootButton>
                    <FootButton aria-label="新建图层"><svg width="11" height="11"><path d="M.5.5H10.500V10.500H.5Z" fill="#fff" stroke="#888" /><path d="M2.500 4.500H6.500V9" fill="#ccc" stroke="#222" /><path d="M2.500 4.500L6.500 8.500" stroke="#222" /><path d="M10 1V10H1" fill="none" stroke="#222" strokeWidth="1.500" /></svg></FootButton>
                    <FootButton aria-label="删除图层"><svg width="11" height="12"><path d="M1 3L4 1L10 3M1.500 4.500H9.500L8.500 11.500H2.500Z" fill="#ddd" stroke="#777" /><path d="M4 5V11M5.500 5V11M7 5V11" stroke="#777" /></svg></FootButton>
                    <svg width="10" height="10"><path d="M8.500 0V10M6.500 2V10M4.500 4V10M2.500 6V10M.5 8V10" stroke="#888" strokeDasharray="1 1" /></svg>
                  </LayerFooter>
                </Panel>
              </Panels>
            </DockBody>
            <Watermark>
              <svg width="250" height="118" viewBox="0 0 250 118">
                <Mark>
                  <text x="-1" y="76" fontSize="55" fontWeight="bold" fontFamily="Liberation Sans">Bai</text>
                  <ellipse cx="93" cy="30" rx="9" ry="12" transform="rotate(-8 93 30)" /><ellipse cx="110" cy="13" rx="9" ry="12" />
                  <ellipse cx="132" cy="14" rx="9" ry="12" transform="rotate(10 132 14)" /><ellipse cx="145" cy="35" rx="9" ry="12" transform="rotate(-8 145 35)" />
                  <path d="M118 32Q126 32 131 41Q136 49 143 53Q152 61 146 71Q140 78 128 77Q118 75 108 77Q92 79 88 68Q86 59 96 51L106 40Q111 32 118 32Z" />
                  <text x="156" y="73" fontSize="42" fontWeight="900" fontFamily="Noto Sans CJK SC">经验</text>
                  <text x="2" y="108" fontSize="27" fontWeight="500" fontFamily="Noto Sans">jingyan.baidu.com</text>
                  <text x="98" y="70" fontSize="36" fontFamily="Lato" fontWeight="bold" strokeWidth="3">du</text>
                </Mark>
              </svg>
            </Watermark>
          </RightDock>
        </Workspace>

        <Taskbar>
          <svg width="246" height="8"><circle cx="27" cy="21" r="19" fill="#5d8bb0" stroke="#dbe9f5" strokeWidth="1.500" /><path d="M84 8Q90 3 101 5L102 8H98Q94 6 90 8Z" fill="#f3c12e" /><path d="M139 8V6H147L151 8Z" fill="#e3d28c" /></svg>
          <TaskButton $w={160} aria-label="浏览器"><svg width="36" height="12"><circle cx="14" cy="15" r="12" fill="#fff" stroke="#57a0dc" strokeWidth="1.500" /></svg></TaskButton>
          <TaskButton $w={159} $active aria-label="Photoshop"><svg width="30" height="12"><path d="M1 3H30V12H1Z" fill="#2864b4" /></svg></TaskButton>
          <Clock>17:04</Clock>
          <ShowDesktop aria-label="显示桌面" />
        </Taskbar>
      </Window>
    </>
  );
}
